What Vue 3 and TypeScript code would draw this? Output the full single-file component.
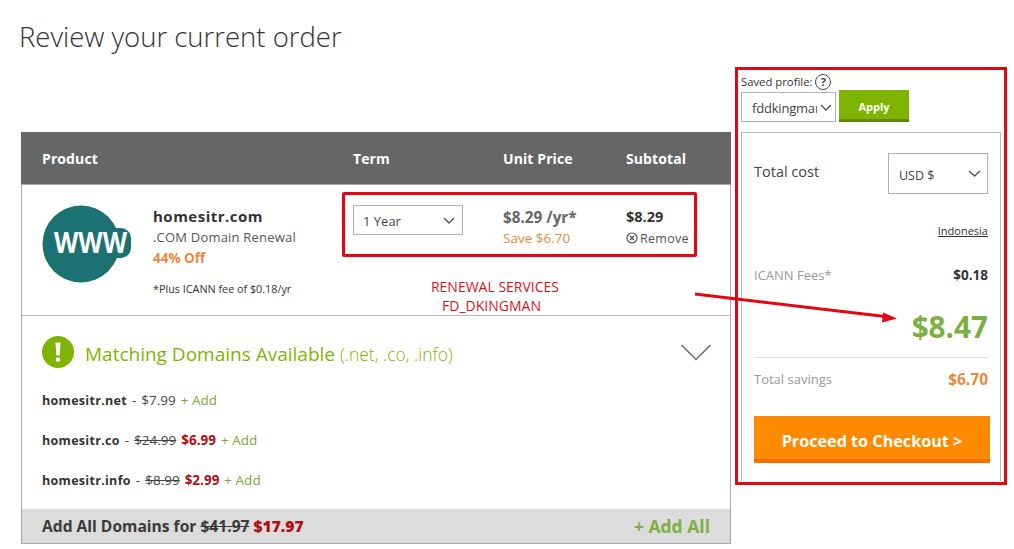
<template>
  <div class="page">
    <div class="main">
      <h1 class="title">Review your current order</h1>
      <section class="cart">
        <div class="cart-head cols">
          <span>Product</span>
          <span>Term</span>
          <span>Unit Price</span>
          <span>Subtotal</span>
        </div>

        <div class="cart-row">
          <div class="cols item">
            <div class="product">
              <svg class="www" viewBox="0 0 90 78" width="90" height="78">
                <circle cx="39" cy="39" r="38.5" fill="#1c7272" />
                <rect x="62" y="23" width="27" height="30" rx="10" fill="#1c7272" />
                <text x="12" y="47.5" textLength="73" lengthAdjust="spacingAndGlyphs" class="www-text">WWW</text>
              </svg>
              <div class="product-info">
                <div class="product-name">homesitr.com</div>
                <div class="product-type">.COM Domain Renewal</div>
                <div class="product-off">44% Off</div>
                <div class="product-note">*Plus ICANN fee of $0.18/yr</div>
              </div>
            </div>
            <div class="term">
              <div class="select term-select">
                <span>1 Year</span>
                <svg viewBox="0 0 12 7" width="12" height="7"><path d="M1 1l5 5 5-5" class="chev" /></svg>
              </div>
            </div>
            <div class="unit">
              <div class="unit-price">$8.29 /yr*</div>
              <div class="unit-save">Save $6.70</div>
            </div>
            <div class="subtotal">
              <div class="subtotal-price">$8.29</div>
              <div class="remove">
                <svg viewBox="0 0 12 12" width="12" height="12">
                  <circle cx="6" cy="6" r="5" fill="none" stroke="#555" stroke-width="1.2" />
                  <path d="M4 4l4 4M8 4l-4 4" stroke="#555" stroke-width="1.4" />
                </svg>
                <span>Remove</span>
              </div>
            </div>
          </div>
          <div class="mark-box"></div>
          <div class="mark-text">
            <span>RENEWAL SERVICES</span>
            <span class="mark-sub">FD_DKINGMAN</span>
          </div>
        </div>

        <div class="matching">
          <div class="matching-head">
            <svg class="alert" viewBox="0 0 32 32" width="32" height="32">
              <circle cx="16" cy="16" r="16" fill="#7fb502" />
              <path d="M13.4 6.500h5.200l-1 13h-3.200z" fill="#fff" />
              <rect x="14" y="21.500" width="4" height="4" fill="#fff" />
            </svg>
            <span class="matching-title">Matching Domains Available</span>
            <span class="matching-tlds">(.net, .co, .info)</span>
            <svg class="toggle" viewBox="0 0 30 17" width="30" height="17">
              <path d="M.5 1l14.500 14.500L29.500 1" fill="none" stroke="#666" stroke-width="1.4" />
            </svg>
          </div>
          <ul class="domains">
            <li v-for="d in domains" :key="d.name">
              <b class="domain-name">{{ d.name }}</b>
              <span class="dash">-</span>
              <s v-if="d.sale" class="price">{{ d.price }}</s>
              <span v-else class="price">{{ d.price }}</span>
              <b v-if="d.sale" class="sale">{{ d.sale }}</b>
              <span class="add">+ Add</span>
            </li>
          </ul>
        </div>

        <div class="add-all">
          <span>Add All Domains for <s>$41.97</s> <b class="sale-total">$17.97</b></span>
          <span class="add-all-link">+ Add All</span>
        </div>
      </section>
    </div>

    <aside class="side">
      <div class="profile-label">
        <span>Saved profile:</span>
        <span class="help">?</span>
      </div>
      <div class="profile-row">
        <div class="select profile-select">
          <span class="clip">fddkingman</span>
          <svg viewBox="0 0 12 7" width="12" height="7"><path d="M1 1l5 5 5-5" class="chev" /></svg>
        </div>
        <button type="button" class="apply">Apply</button>
      </div>

      <div class="summary">
        <div class="total-row">
          <span class="total-label">Total cost</span>
          <div class="select currency">
            <span class="currency-text">USD $</span>
            <svg viewBox="0 0 13 7" width="13" height="7"><path d="M1 1l5.500 5 5.500-5" class="chev" /></svg>
          </div>
        </div>
        <a class="country">Indonesia</a>
        <div class="fee-row">
          <span class="muted">ICANN Fees*</span>
          <b>$0.18</b>
        </div>
        <div class="grand">$8.47</div>
        <div class="save-row">
          <span class="muted">Total savings</span>
          <b>$6.70</b>
        </div>
        <button type="button" class="checkout">Proceed to Checkout &gt;</button>
      </div>
    </aside>

    <svg class="arrow" viewBox="0 0 1014 549" width="1014" height="549">
      <path d="M695 294L885 316.500" stroke="#e30613" stroke-width="3" fill="none" />
      <path d="M897 318.500L883 312.500 882 322.500z" fill="#e30613" />
    </svg>
  </div>
</template>

<script setup lang="ts">
interface Domain {
  name: string;
  price: string;
  sale?: string;
}

const domains: Domain[] = [
  { name: 'homesitr.net', price: '$7.99' },
  { name: 'homesitr.co', price: '$24.99', sale: '$6.99' },
  { name: 'homesitr.info', price: '$8.99', sale: '$2.99' },
];
</script>

<style>
html,
body {
  margin: 0;
  background: #fff;
}
</style>

<style scoped>
.page {
  position: relative;
  display: flex;
  width: 1014px;
  height: 549px;
  overflow: hidden;
  font-family: 'Open Sans', 'Noto Sans', sans-serif;
  color: #333;
}

.main {
  width: 710px;
  margin-left: 21px;
}

.title {
  margin: 18px 0 0 -2px;
  height: 114px;
  font-size: 27.500px;
  line-height: 38px;
  font-weight: 300;
  color: #333;
}

.cart {
  border: 1px solid #aaa;
  border-top: 0;
  height: 412px;
  box-sizing: border-box;
}

.cols {
  display: grid;
  grid-template-columns: 311px 150px 123px 1fr;
}

.cart-head {
  height: 52px;
  align-items: center;
  margin: 0 -1px;
  padding-left: 21px;
  background: #666;
  color: #fff;
  font-size: 14px;
  font-weight: 700;
  border-bottom: 1px solid #aaa;
  letter-spacing: 0.1px;
}

.cart-row {
  position: relative;
  height: 131px;
  border-bottom: 1px solid #bbb;
  box-sizing: border-box;
}

.item {
  padding: 20px 0 0 20px;
}

.product {
  display: flex;
}

.www {
  flex: none;
}

.www-text {
  font-family: 'Open Sans', sans-serif;
  font-size: 29px;
  font-weight: 700;
  fill: #fff;
}

.product-info {
  margin-left: 21px;
  padding-top: 1px;
}

.product-name {
  font-size: 15px;
  line-height: 20px;
  font-weight: 700;
  letter-spacing: 0.5px;
  color: #333;
}

.product-type {
  font-size: 13px;
  line-height: 22px;
  letter-spacing: 0.2px;
  color: #555;
  white-space: nowrap;
}

.product-off {
  font-size: 13.500px;
  line-height: 20px;
  font-weight: 700;
  color: #e9893f;
}

.product-note {
  margin-top: 14px;
  font-size: 10.800px;
  line-height: 14px;
  color: #333;
  white-space: nowrap;
}

.select {
  display: flex;
  align-items: center;
  justify-content: space-between;
  border: 1px solid #b3b3b3;
  box-sizing: border-box;
  background: #fff;
  color: #444;
  font-size: 12.500px;
}

.chev {
  fill: none;
  stroke: #555;
  stroke-width: 1.4;
}

.term-select {
  width: 110px;
  height: 30px;
  padding: 1px 7px 0 9px;
  font-size: 13px;
}

.unit {
  padding-top: 1px;
}

.unit-price {
  font-size: 15.300px;
  line-height: 22px;
  font-weight: 700;
  color: #666;
}

.unit-save {
  font-size: 13.500px;
  line-height: 20px;
  color: #e9893f;
}

.subtotal {
  padding-top: 1px;
}

.subtotal-price {
  font-size: 14.500px;
  line-height: 22px;
  font-weight: 700;
  color: #333;
}

.remove {
  display: flex;
  align-items: center;
  gap: 2px;
  height: 20px;
  font-size: 12.500px;
  color: #555;
  letter-spacing: 0.3px;
}

.mark-box {
  position: absolute;
  left: 320px;
  top: 7px;
  width: 355px;
  height: 65px;
  box-sizing: border-box;
  border: 3px solid #e30613;
  border-radius: 2px;
}

.mark-text {
  position: absolute;
  left: 373px;
  top: 92px;
  width: 200px;
  display: flex;
  flex-direction: column;
  align-items: center;
  font-size: 14px;
  line-height: 19px;
  color: #d8131c;
}

.mark-sub {
  margin-right: 7px;
}

.matching-head {
  position: relative;
  display: flex;
  align-items: center;
  height: 32px;
  margin: 20px 0 0 20px;
}

.matching-title {
  margin-left: 11px;
  padding-top: 3px;
  font-size: 19px;
  color: #7fb502;
}

.matching-tlds {
  margin-left: 5px;
  padding-top: 3px;
  font-size: 17.500px;
  font-weight: 300;
  color: #7fb502;
}

.toggle {
  position: absolute;
  left: 639px;
  top: 8px;
}

.domains {
  list-style: none;
  margin: 12px 0 0 20px;
  padding: 0;
  font-size: 13.500px;
  color: #444;
}

.domains li {
  height: 40px;
  line-height: 40px;
  white-space: nowrap;
}

.domain-name {
  font-size: 12.500px;
  letter-spacing: 0.3px;
  color: #333;
}

.dash {
  margin-left: 5px;
}

.price,
.sale,
.add {
  margin-left: 5px;
}

.sale {
  color: #b00f14;
}

.add {
  color: #7ba63e;
}

.add-all {
  display: flex;
  justify-content: space-between;
  align-items: center;
  height: 34px;
  margin-top: 9px;
  padding: 0 20px;
  background: #dcdcdc;
  font-size: 15.600px;
  font-weight: 700;
  color: #3a3a3a;
}

.sale-total {
  color: #b00f14;
}

.add-all-link {
  font-size: 17.500px;
  color: #7eb045;
}

.side {
  position: relative;
  width: 272px;
  height: 418px;
  margin: 67px 0 0 4px;
  padding: 3px 3px 0;
  box-sizing: border-box;
  border: 3px solid #e30613;
}

.profile-label {
  display: flex;
  align-items: center;
  gap: 3px;
  height: 17px;
  font-size: 11.300px;
  color: #333;
}

.help {
  width: 16px;
  height: 16px;
  border: 1.5px solid #444;
  border-radius: 50%;
  box-sizing: border-box;
  text-align: center;
  font-size: 11px;
  line-height: 13px;
  font-weight: 700;
  color: #444;
}

.profile-row {
  display: flex;
  align-items: flex-end;
  gap: 3px;
  height: 32px;
}

.profile-select {
  width: 95px;
  height: 30px;
  padding: 1px 3px 0 10px;
  font-size: 13px;
}

.clip {
  width: 65px;
  overflow: hidden;
  white-space: nowrap;
  letter-spacing: -0.2px;
}

.apply {
  width: 70px;
  height: 32px;
  padding: 4px 0 0;
  border: 0;
  border-bottom: 3px solid #5f8a02;
  background: #7fb502;
  color: #fff;
  font: 700 11px 'Open Sans', sans-serif;
}

.summary {
  height: 349px;
  margin-top: 10px;
  padding: 20px 12px 0;
  box-sizing: border-box;
  border: 1px solid #bbb;
  border-bottom: 0;
}

.total-row {
  display: flex;
  justify-content: space-between;
  align-items: flex-start;
}

.total-label {
  margin-top: 9px;
  font-size: 14.500px;
  line-height: 20px;
  color: #444;
}

.currency {
  width: 100px;
  height: 41px;
  padding: 0 6px 0 10px;
  font-size: 12.500px;
}

.currency-text {
  padding-top: 3px;
}

.country {
  display: block;
  margin-top: 29px;
  text-align: right;
  font-size: 11px;
  line-height: 16px;
  text-decoration: underline;
  color: #333;
}

.fee-row,
.save-row {
  display: flex;
  justify-content: space-between;
  align-items: center;
  font-size: 13px;
}

.fee-row {
  margin-top: 26px;
  height: 20px;
}

.fee-row b {
  color: #333;
  font-size: 13.500px;
}

.muted {
  color: #999;
}

.grand {
  margin-top: 19px;
  height: 46px;
  padding-bottom: 7px;
  text-align: right;
  font-size: 29.700px;
  line-height: 46px;
  font-weight: 700;
  color: #7cb044;
  border-bottom: 1px solid #ddd;
}

.save-row {
  margin-top: 11px;
  height: 20px;
}

.save-row b {
  color: #e9893f;
  font-size: 15.500px;
}

.checkout {
  display: block;
  width: 236px;
  height: 47px;
  margin-top: 27px;
  padding: 6px 0 0;
  border: 0;
  border-bottom: 4px solid #f56f00;
  background: #ff8a00;
  color: #fff;
  font: 700 16.200px 'Open Sans', sans-serif;
}

.arrow {
  position: absolute;
  left: 0;
  top: 0;
  pointer-events: none;
}
</style>
